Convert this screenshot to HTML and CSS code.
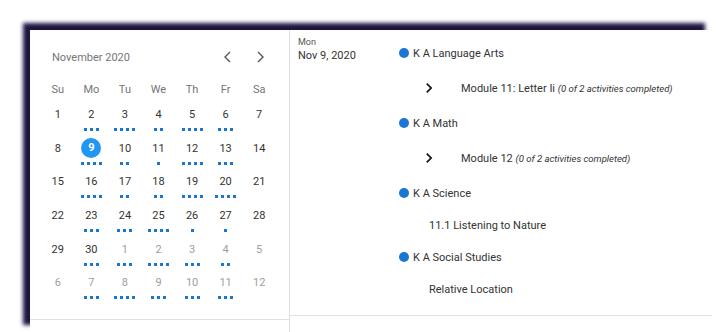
FILE: index.html
```html
<!DOCTYPE html>
<html lang="en">
  <head>
    <title>Calendar</title>
    <meta charset="utf-8">
    <link rel="stylesheet" href="styles.css">
  </head>
  <body>

  <div class="card">
    <div class="cal-col">
      <div class="calendar">
        <div class="cal-head">
          <span class="month">November 2020</span>
          <button class="nav"><svg width="10" height="12" viewBox="0 0 10 12"><polyline points="7,1 2,6 7,11" fill="none" stroke="#555" stroke-width="1.4"/></svg></button>
          <button class="nav"><svg width="10" height="12" viewBox="0 0 10 12"><polyline points="3,1 8,6 3,11" fill="none" stroke="#555" stroke-width="1.4"/></svg></button>
        </div>
        <div class="week">
          <span>Su</span><span>Mo</span><span>Tu</span><span>We</span><span>Th</span><span>Fr</span><span>Sa</span>
        </div>
        <div class="days">
          <div class="day"><span class="num">1</span></div>
          <div class="day"><span class="num">2</span><i class="dots n3"></i></div>
          <div class="day"><span class="num">3</span><i class="dots n4"></i></div>
          <div class="day"><span class="num">4</span><i class="dots n2"></i></div>
          <div class="day"><span class="num">5</span><i class="dots n4"></i></div>
          <div class="day"><span class="num">6</span><i class="dots n3"></i></div>
          <div class="day"><span class="num">7</span></div>

          <div class="day"><span class="num">8</span></div>
          <div class="day selected"><span class="num">9</span><i class="dots n4"></i></div>
          <div class="day"><span class="num">10</span><i class="dots n2"></i></div>
          <div class="day"><span class="num">11</span><i class="dots n1"></i></div>
          <div class="day"><span class="num">12</span><i class="dots n4"></i></div>
          <div class="day"><span class="num">13</span><i class="dots n3"></i></div>
          <div class="day"><span class="num">14</span></div>

          <div class="day"><span class="num">15</span></div>
          <div class="day"><span class="num">16</span><i class="dots n4"></i></div>
          <div class="day"><span class="num">17</span><i class="dots n2"></i></div>
          <div class="day"><span class="num">18</span><i class="dots n2"></i></div>
          <div class="day"><span class="num">19</span><i class="dots n4"></i></div>
          <div class="day"><span class="num">20</span><i class="dots n4"></i></div>
          <div class="day"><span class="num">21</span></div>

          <div class="day"><span class="num">22</span></div>
          <div class="day"><span class="num">23</span><i class="dots n3"></i></div>
          <div class="day"><span class="num">24</span><i class="dots n3"></i></div>
          <div class="day"><span class="num">25</span><i class="dots n4"></i></div>
          <div class="day"><span class="num">26</span><i class="dots n1"></i></div>
          <div class="day"><span class="num">27</span><i class="dots n1"></i></div>
          <div class="day"><span class="num">28</span></div>

          <div class="day"><span class="num">29</span></div>
          <div class="day"><span class="num">30</span><i class="dots n3"></i></div>
          <div class="day other"><span class="num">1</span><i class="dots n3"></i></div>
          <div class="day other"><span class="num">2</span><i class="dots n4"></i></div>
          <div class="day other"><span class="num">3</span><i class="dots n3"></i></div>
          <div class="day other"><span class="num">4</span><i class="dots n2"></i></div>
          <div class="day other"><span class="num">5</span></div>

          <div class="day other"><span class="num">6</span></div>
          <div class="day other"><span class="num">7</span><i class="dots n3"></i></div>
          <div class="day other"><span class="num">8</span><i class="dots n4"></i></div>
          <div class="day other"><span class="num">9</span><i class="dots n3"></i></div>
          <div class="day other"><span class="num">10</span><i class="dots n3"></i></div>
          <div class="day other"><span class="num">11</span><i class="dots n3"></i></div>
          <div class="day other"><span class="num">12</span></div>
        </div>
      </div>
    </div>

    <div class="agenda-col">
      <div class="agenda">
        <div class="date">
          <div class="weekday">Mon</div>
          <div class="full-date">Nov 9, 2020</div>
        </div>
        <div class="events">
          <div class="course"><span class="bullet"></span>K A Language Arts</div>
          <div class="item expand">
            <svg class="chev" width="20" height="20" viewBox="0 0 24 24"><path d="M8.6 16.6 13.2 12 8.6 7.4 10 6l6 6-6 6z" fill="#111"/></svg>
            <span>Module 11: Letter Ii <em>(0 of 2 activities completed)</em></span>
          </div>
          <div class="course"><span class="bullet"></span>K A Math</div>
          <div class="item expand">
            <svg class="chev" width="20" height="20" viewBox="0 0 24 24"><path d="M8.6 16.6 13.2 12 8.6 7.4 10 6l6 6-6 6z" fill="#111"/></svg>
            <span>Module 12 <em>(0 of 2 activities completed)</em></span>
          </div>
          <div class="course"><span class="bullet"></span>K A Science</div>
          <div class="item">11.1 Listening to Nature</div>
          <div class="course"><span class="bullet"></span>K A Social Studies</div>
          <div class="item">Relative Location</div>
        </div>
      </div>
    </div>
  </div>

  </body>
</html>
```

FILE: styles.css
```css
html, body {
  margin: 0;
  padding: 0;
  height: 100%;
  overflow: hidden;
}
body {
  background: #ffffff;
  color: #333333;
  font-family: Roboto, "Liberation Sans", sans-serif;
  font-size: 11px;
}

.card {
  margin: 30px 0 0 30px;
  width: 682px;
  height: 302px;
  background: #ffffff;
  display: flex;
  box-shadow: -7px -7px 4px rgb(28, 23, 66);
}

.cal-col {
  width: 259px;
  border-right: 1px solid #e0e0e0;
}
.calendar {
  padding: 11px 13px 16px 11px;
  border-bottom: 1px solid #e0e0e0;
}

.cal-head {
  display: flex;
  align-items: center;
  height: 32px;
  padding-left: 11px;
  margin-bottom: 4px;
}
.month {
  flex: 1;
  font-size: 11px;
  color: #757575;
}
.nav {
  width: 32px;
  height: 32px;
  border: 0;
  padding: 0;
  background: none;
  display: flex;
  align-items: center;
  justify-content: center;
}

.week {
  display: grid;
  grid-template-columns: repeat(7, 1fr);
  height: 24px;
  align-items: center;
  text-align: center;
  font-size: 11px;
  color: #757575;
}

.days {
  display: grid;
  grid-template-columns: repeat(7, 1fr);
  grid-auto-rows: 33.67px;
}
.day {
  display: flex;
  flex-direction: column;
  align-items: center;
  padding-top: 4px;
  font-size: 11px;
  color: #333333;
}
.day .num {
  height: 19px;
  line-height: 19px;
}
.day.other {
  color: #9e9e9e;
}
.day.selected .num {
  width: 20px;
  height: 20px;
  line-height: 20px;
  margin-top: -1px;
  border-radius: 50%;
  text-align: center;
  background: #2196f3;
  color: #ffffff;
  font-weight: bold;
}
.day.selected .dots {
  margin-top: 4px;
}

.dots {
  display: block;
  height: 3px;
  margin-top: 4px;
  background: linear-gradient(to right, #1976d2 3px, transparent 3px) 0 0 / 6px 3px repeat-x;
}
.dots.n1 { width: 3px; }
.dots.n2 { width: 9px; }
.dots.n3 { width: 15px; }
.dots.n4 { width: 21px; }

.agenda-col {
  flex: 1;
}
.agenda {
  display: flex;
  padding: 6px 0 10px 8px;
  border-bottom: 1px solid #e0e0e0;
}
.date {
  width: 101px;
}
.weekday {
  font-size: 9px;
  line-height: 12px;
  color: #555555;
}
.full-date {
  font-size: 11px;
  line-height: 16px;
  color: #333333;
}

.events {
  flex: 1;
  padding-top: 1px;
}
.course {
  display: flex;
  align-items: center;
  height: 32px;
  font-size: 11px;
}
.bullet {
  width: 10px;
  height: 10px;
  border-radius: 50%;
  background: #1976d2;
  margin-right: 4px;
}
.item {
  display: flex;
  align-items: center;
  height: 32px;
  padding-left: 30px;
  font-size: 11px;
}
.item.expand {
  height: 38px;
  padding-left: 20px;
}
.chev {
  margin-right: 22px;
}
.item em {
  font-size: 9.5px;
}
```
